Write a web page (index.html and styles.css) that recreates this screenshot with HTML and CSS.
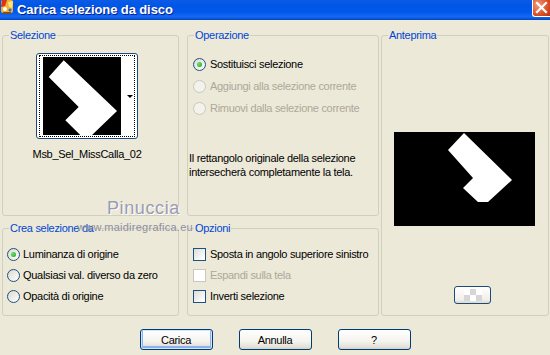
FILE: index.html
```html
<!DOCTYPE html>
<html lang="it">
<head>
  <meta charset="UTF-8">
  <meta name="viewport" content="width=device-width, initial-scale=1.0">
  <title>Carica selezione da disco</title>
  <link rel="stylesheet" href="styles.css">
</head>
<body>
  <div class="window">
    <div class="titlebar">
      <svg class="app-icon" width="15" height="15" viewBox="0 0 15 15">
        <rect x="1" y="0" width="12" height="13" rx="2" fill="#F2B233"/>
        <path d="M2 0 L7 0 L5 6 L1 7 Z" fill="#D8341E"/>
        <path d="M8 2 L13 1 L12 8 L9 7 Z" fill="#FFE27A"/>
        <circle cx="5" cy="9" r="2" fill="#fff"/>
        <circle cx="10" cy="10" r="1.5" fill="#2A6BD8"/>
        <rect x="3" y="12" width="8" height="2" fill="#8A4A1A"/>
      </svg>
      <span class="title">Carica selezione da disco</span>
      <div class="close">
        <svg width="17" height="16" viewBox="0 0 17 16">
          <path d="M4 3 L13 12 M13 3 L4 12" stroke="#fff" stroke-width="2.2" stroke-linecap="square"/>
        </svg>
      </div>
    </div>

    <div class="panels">
      <fieldset class="group col-left">
        <legend>Selezione</legend>
        <div class="thumb-wrap">
          <div class="thumb">
            <div class="thumb-focus">
              <svg width="78" height="78" viewBox="0 0 78 78">
                <rect width="78" height="78" fill="#000"/>
                <polygon points="5.7,20 20.7,3.3 74,54 49,78 37.3,78 22.3,63.3 35.7,50" fill="#fff"/>
              </svg>
              <div class="thumb-strip"><span class="arrow"></span></div>
            </div>
          </div>
          <div class="thumb-name">Msb_Sel_MissCalla_02</div>
        </div>
      </fieldset>

      <fieldset class="group col-mid">
        <legend>Operazione</legend>
        <div class="options">
          <label class="opt"><span class="radio checked"></span>Sostituisci selezione</label>
          <label class="opt disabled"><span class="radio"></span>Aggiungi alla selezione corrente</label>
          <label class="opt disabled"><span class="radio"></span>Rimuovi dalla selezione corrente</label>
        </div>
        <p class="note">Il rettangolo originale della selezione<br>intersecherà completamente la tela.</p>
      </fieldset>

      <fieldset class="group preview">
        <legend>Anteprima</legend>
        <svg class="preview-img" width="141" height="94" viewBox="0 0 141 94">
          <rect width="141" height="94" fill="#000"/>
          <polygon points="54,18 70,1 118,48 94,70 84,70 69,56 79,46" fill="#fff"/>
        </svg>
        <div class="mini-btn"><span class="checker"></span></div>
      </fieldset>

      <fieldset class="group col-left">
        <legend>Crea selezione da</legend>
        <div class="options source-list">
          <label class="opt"><span class="radio checked"></span>Luminanza di origine</label>
          <label class="opt"><span class="radio"></span>Qualsiasi val. diverso da zero</label>
          <label class="opt"><span class="radio"></span>Opacità di origine</label>
        </div>
      </fieldset>

      <fieldset class="group col-mid">
        <legend>Opzioni</legend>
        <div class="options flags">
          <label class="opt"><span class="check"></span>Sposta in angolo superiore sinistro</label>
          <label class="opt disabled"><span class="check"></span>Espandi sulla tela</label>
          <label class="opt"><span class="check"></span>Inverti selezione</label>
        </div>
      </fieldset>
    </div>

    <div class="buttons">
      <button class="btn default">Carica</button>
      <button class="btn">Annulla</button>
      <button class="btn">?</button>
    </div>

    <!-- watermark sits over the panels -->
    <div class="watermark">
      <span class="wm-name">Pinuccia</span>
      <span class="wm-url">www.maidiregrafica.eu</span>
    </div>
  </div>
</body>
</html>
```

FILE: styles.css
```css
* {
  box-sizing: border-box;
}
body {
  margin: 0;
  font-family: "Liberation Sans", Arial, sans-serif;
  font-size: 11px;
  letter-spacing: -0.3px;
  color: #000;
  background: #ECE9D8;
}
.window {
  position: relative;
  width: 550px;
  height: 355px;
  background: #ECE9D8;
  overflow: hidden;
}

/* title bar */
.titlebar {
  display: flex;
  align-items: center;
  height: 20px;
  padding-bottom: 1px;
  background: linear-gradient(to bottom, #0A5CE8 0%, #0055E5 30%, #0058EC 60%, #1468F2 82%, #0B5AE0 92%, #0043B8 100%);
  color: #fff;
}
.app-icon {
  align-self: flex-start;
  margin-right: 2px;
  flex: none;
}
.title {
  font-weight: bold;
  font-size: 13px;
  letter-spacing: -0.1px;
  text-shadow: 1px 1px 0 #0A1E8A;
}
.close {
  align-self: flex-start;
  margin-left: auto;
  width: 18px;
  height: 17px;
  border-left: 1px solid #fff;
  border-bottom: 1px solid #fff;
  border-bottom-left-radius: 3px;
  background: radial-gradient(circle at 30% 30%, #F29A7D, #DA4A1F 65%, #B83510);
}
.close svg {
  display: block;
}

/* group boxes */
.panels {
  display: grid;
  grid-template-columns: 185px 194px 168px;
  grid-template-rows: 187px 94px;
  row-gap: 6px;
  padding: 9px 0 0 2px;
}
.group {
  margin: 0;
  padding: 0;
  min-width: 0;
  border: 1px solid #D0D0BF;
  border-radius: 3px;
}
.group legend {
  margin-left: 6px;
  padding: 0 1px;
  line-height: 13px;
  color: #0046D5;
}
.col-left {
  margin-right: 8px;
}
.col-mid {
  margin-right: 2px;
}
.preview {
  grid-column: 3;
  grid-row: 1 / span 2;
}

/* selection thumbnail */
.thumb-wrap {
  display: flex;
  flex-direction: column;
  align-items: center;
  width: 102px;
  margin: 11px 0 0 33px;
}
.thumb {
  width: 102px;
  height: 86px;
  padding: 1px 2px;
  border: 1px solid #1B4B7A;
  border-radius: 3px;
  background: #fff;
}
.thumb-focus {
  display: flex;
  height: 82px;
  padding: 1px 0 1px 3px;
  border: 1px dotted #000;
}
.thumb-focus svg {
  display: block;
  flex: none;
}
.thumb-strip {
  flex: 1;
  display: flex;
  align-items: center;
  justify-content: flex-end;
  padding-right: 1px;
}
.arrow {
  width: 0;
  height: 0;
  border-left: 3px solid transparent;
  border-right: 3px solid transparent;
  border-top: 3px solid #000;
}
.thumb-name {
  margin-top: 9px;
  line-height: 13px;
  white-space: nowrap;
}

/* radio / check lists */
.options {
  display: flex;
  flex-direction: column;
  gap: 9px;
  margin: 16px 0 0 5px;
}
.source-list {
  gap: 8px;
  margin: 13px 0 0 4px;
}
.source-list .opt {
  gap: 3px;
}
.flags {
  gap: 8px;
  margin: 13px 0 0 5px;
}
.opt {
  display: flex;
  align-items: center;
  gap: 4px;
  height: 13px;
  line-height: 13px;
  white-space: nowrap;
}
.opt.disabled {
  color: #ACA899;
}
.radio {
  flex: none;
  display: flex;
  align-items: center;
  justify-content: center;
  width: 13px;
  height: 13px;
  border: 1px solid #1C5180;
  border-radius: 50%;
  background: linear-gradient(135deg, #DCD9CE, #fff);
}
.radio.checked::after {
  content: "";
  width: 5px;
  height: 5px;
  border-radius: 50%;
  background: radial-gradient(circle at 35% 35%, #6BE36B, #21A121);
}
.opt.disabled .radio {
  border-color: #CAC8BB;
  background: #F3F2EC;
}
.check {
  flex: none;
  width: 13px;
  height: 13px;
  border: 1px solid #1C5180;
  background: linear-gradient(135deg, #DCDCD7, #fff 90%);
}
.opt.disabled .check {
  border-color: #CAC8BB;
  background: #fff;
}
.note {
  margin: 36px 0 0 0;
  padding-left: 1px;
  line-height: 14px;
}

/* preview */
.preview-img {
  display: block;
  margin: 90px 0 0 12px;
}
.mini-btn {
  display: flex;
  align-items: center;
  justify-content: center;
  width: 37px;
  height: 18px;
  margin: 60px 0 0 72px;
  border: 1px solid #1B4B7A;
  border-radius: 3px;
  background: linear-gradient(#fff, #F1EFE8 80%, #DCD8CC);
}
.checker {
  width: 18px;
  height: 12px;
  background: conic-gradient(#D6D6D6 25%, #fff 0 50%, #D6D6D6 0 75%, #fff 0) 0 0 / 12px 12px;
}

/* dialog buttons */
.buttons {
  display: flex;
  justify-content: center;
  gap: 26px;
  margin-top: 13px;
}
.btn {
  width: 73px;
  height: 21px;
  padding: 0;
  font-family: inherit;
  font-size: 11px;
  letter-spacing: -0.3px;
  color: #000;
  border: 1px solid #003C74;
  border-radius: 3px;
  background: linear-gradient(#fff, #F4F3EE 60%, #E3E0D6 90%, #D6D0C5);
}
.btn.default {
  box-shadow: inset 0 0 0 1px #CEE7FF, inset 0 -1px 0 2px #8FB0EA;
}

/* watermark */
.watermark {
  position: absolute;
  left: 0;
  top: 0;
  pointer-events: none;
}
.wm-name {
  position: absolute;
  left: 107px;
  top: 198px;
  font-size: 18px;
  line-height: 20px;
  letter-spacing: 0.6px;
  color: #9B9BB3;
  text-shadow: 1px 1px 0 #fff;
  white-space: nowrap;
}
.wm-url {
  position: absolute;
  left: 77px;
  top: 221px;
  font-size: 11px;
  line-height: 13px;
  letter-spacing: 0.25px;
  color: #8E8EA3;
  white-space: nowrap;
}
```
